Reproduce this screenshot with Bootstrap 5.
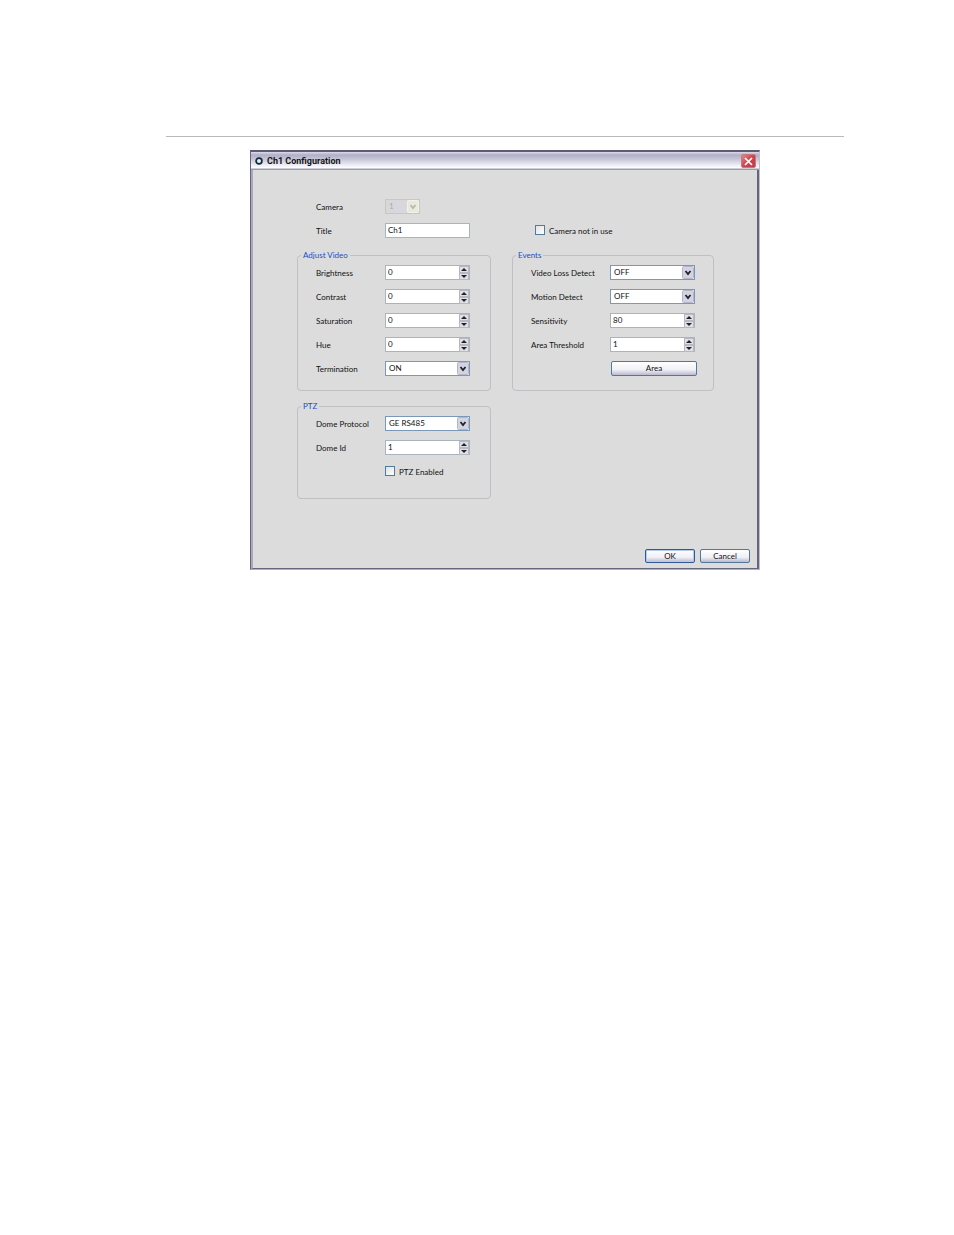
<!DOCTYPE html>
<html lang="en">
<head>
<meta charset="utf-8">
<meta name="viewport" content="width=device-width, initial-scale=1">
<title>Ch1 Configuration</title>
<link href="https://cdn.jsdelivr.net/npm/bootstrap@5.3.0/dist/css/bootstrap.min.css" rel="stylesheet">
<style>
body{font-family:Lato,"Liberation Sans",sans-serif;font-size:8px;line-height:12px;color:#111;background:#fff}
.sheet{padding:136px 110px 40px 166px}
.rule{border-top:1px solid #b9b9b9}
.dialog{max-width:510px;margin-top:13px;background:#dcdcdc;border:1px solid #66657f;border-top:2px solid #5d5c76;border-right-color:#c0c0cc;border-bottom-color:#b0b0c2}
.titlebar{height:18px;padding:0 3px 0 4px;background:linear-gradient(#dcdce8 0,#b0afc8 3px,#c5c4d7 7px,#fafafd 15px,#fff 16px,#9b9bb0 17px)}
.titlebar h1{font:bold 9px/18px Roboto,"Liberation Sans",sans-serif;color:#151515}
.closer{width:15px;height:14px;border:1px solid #c9787f;border-radius:2px;background:linear-gradient(135deg,#dd8a84,#cc4450 50%,#c03a48)}
.client{padding:24px 43px 0 44px;border:solid #66657f;border-width:0 2px 1px;border-left-color:#a9a9be}
.cols{display:grid;grid-template-columns:194fr 202fr;column-gap:21px}
.line{display:flex;align-items:center;height:24px}
.line>label{padding-top:2px}
.line>label:first-child{width:69px;flex:none}
.events .line>label:first-child{width:79px}
.line.inset{padding-left:69px}
.top-fields{padding-left:19px;margin-bottom:8px}
.unused{padding-left:23px;margin-bottom:8px}
fieldset.group{border:1px solid #bfbfc4;border-radius:4px;padding:0 0 10px 18px}
fieldset.ptz{padding-bottom:15px;margin-top:10px}
.group legend{float:none;width:auto;margin:0 0 0 -15px;padding:0 2px;font-size:8px;line-height:10px;color:#1a4fc4}
.field{width:85px;height:15px;border:1px solid #a9b4c2;border-radius:0;background-color:#fff;font-size:8px;line-height:12px;color:#111;padding:0 2px}
select.field{appearance:none;border-color:#7b98b8;padding:0 14px 0 3px;background-repeat:no-repeat;background-position:right center;background-image:url("data:image/svg+xml,%3Csvg xmlns='http://www.w3.org/2000/svg' width='12' height='13'%3E%3Crect x='.5' y='.5' width='11' height='12' rx='1' fill='%23d3d4e2' stroke='%23b3b5ca'/%3E%3Cpath d='M3.5 5 6 8l2.500-3' fill='none' stroke='%23222' stroke-width='1.800'/%3E%3C/svg%3E")}
select.field:disabled{width:35px;color:#aaa;opacity:1;border-color:#c8c8bb;background-color:#d8d8dc;background-image:url("data:image/svg+xml,%3Csvg xmlns='http://www.w3.org/2000/svg' width='12' height='13'%3E%3Crect x='.5' y='.5' width='11' height='12' rx='1' fill='%23e9e9df' stroke='%23f2f2ea'/%3E%3Cpath d='M3.500 5 6 8l2.500-3' fill='none' stroke='%23b9b9a4' stroke-width='1.800'/%3E%3C/svg%3E")}
.spin{display:flex;padding:0 0 0 2px}
.spin input{flex:1;min-width:0;border:0;padding:0;background:none;font-size:8px;line-height:12px;color:#111;appearance:textfield;-moz-appearance:textfield}
.spin input::-webkit-inner-spin-button{display:none}
.arrows{width:10px;display:flex;flex-direction:column}
.arrows button{flex:1;display:flex;padding:0;border:1px solid #b8b8c4;background:#dfdfe6}
.arrows svg{width:8px;height:5px;margin:auto;fill:#222}
.tick{width:10px;height:10px;margin:0 4px 0 0;appearance:none;border:1px solid #4f7c9c;background:linear-gradient(135deg,#dde3e8,#fff)}
.push{height:14px;width:50px;padding:0;border:1px solid #54779c;border-radius:2px;background:linear-gradient(#fff,#f0f0f6 60%,#b9b9d0);font-size:8px;line-height:12px;color:#111}
.push.default{border-color:#31599a;box-shadow:inset 0 0 0 1px #b5cbee}
.push.area{width:86px;height:15px;margin-left:80px}
.actions{display:flex;justify-content:flex-end;gap:5px;margin:50px -36px 0 0;padding-bottom:5px}
</style>
</head>
<body>
<main class="sheet">
<div class="rule"></div>
<form class="dialog mx-auto" onsubmit="return false">
<header class="titlebar d-flex align-items-center">
<svg width="8" height="8" viewBox="0 0 8 8"><circle cx="4" cy="4" r="2.900" fill="#d8f2f8" stroke="#14293d" stroke-width="1.700"/></svg>
<h1 class="m-0 ms-1 flex-grow-1">Ch1 Configuration</h1>
<button type="button" class="closer d-flex p-0" aria-label="Close"><svg class="m-auto" width="9" height="9" viewBox="0 0 9 9"><path d="M1 1 8 8M8 1 1 8" stroke="#fff" stroke-width="1.700"/></svg></button>
</header>
<div class="client">
<div class="cols">
<div class="top-fields">
<div class="line"><label for="camera">Camera</label><select id="camera" class="field" disabled><option>1</option></select></div>
<div class="line"><label for="title">Title</label><input id="title" class="field" type="text" value="Ch1"></div>
</div>
<div class="unused align-self-end"><div class="line"><input class="tick" type="checkbox" id="unused"><label for="unused">Camera not in use</label></div></div>
<div>
<fieldset class="group">
<legend>Adjust Video</legend>
<div class="line"><label for="brightness">Brightness</label><div class="field spin"><input id="brightness" type="number" value="0"><span class="arrows"><button type="button" aria-label="Increase"><svg viewBox="0 0 8 5"><path d="M1 4 4 1l3 3z"/></svg></button><button type="button" aria-label="Decrease"><svg viewBox="0 0 8 5"><path d="M1 1h6L4 4z"/></svg></button></span></div></div>
<div class="line"><label for="contrast">Contrast</label><div class="field spin"><input id="contrast" type="number" value="0"><span class="arrows"><button type="button" aria-label="Increase"><svg viewBox="0 0 8 5"><path d="M1 4 4 1l3 3z"/></svg></button><button type="button" aria-label="Decrease"><svg viewBox="0 0 8 5"><path d="M1 1h6L4 4z"/></svg></button></span></div></div>
<div class="line"><label for="saturation">Saturation</label><div class="field spin"><input id="saturation" type="number" value="0"><span class="arrows"><button type="button" aria-label="Increase"><svg viewBox="0 0 8 5"><path d="M1 4 4 1l3 3z"/></svg></button><button type="button" aria-label="Decrease"><svg viewBox="0 0 8 5"><path d="M1 1h6L4 4z"/></svg></button></span></div></div>
<div class="line"><label for="hue">Hue</label><div class="field spin"><input id="hue" type="number" value="0"><span class="arrows"><button type="button" aria-label="Increase"><svg viewBox="0 0 8 5"><path d="M1 4 4 1l3 3z"/></svg></button><button type="button" aria-label="Decrease"><svg viewBox="0 0 8 5"><path d="M1 1h6L4 4z"/></svg></button></span></div></div>
<div class="line"><label for="termination">Termination</label><select id="termination" class="field"><option>ON</option><option>OFF</option></select></div>
</fieldset>
<fieldset class="group ptz">
<legend>PTZ</legend>
<div class="line"><label for="protocol">Dome Protocol</label><select id="protocol" class="field"><option>GE RS485</option></select></div>
<div class="line"><label for="domeid">Dome Id</label><div class="field spin"><input id="domeid" type="number" value="1"><span class="arrows"><button type="button" aria-label="Increase"><svg viewBox="0 0 8 5"><path d="M1 4 4 1l3 3z"/></svg></button><button type="button" aria-label="Decrease"><svg viewBox="0 0 8 5"><path d="M1 1h6L4 4z"/></svg></button></span></div></div>
<div class="line inset"><input class="tick" type="checkbox" id="ptzon"><label for="ptzon">PTZ Enabled</label></div>
</fieldset>
</div>
<fieldset class="group events align-self-start">
<legend>Events</legend>
<div class="line"><label for="loss">Video Loss Detect</label><select id="loss" class="field"><option>OFF</option><option>ON</option></select></div>
<div class="line"><label for="motion">Motion Detect</label><select id="motion" class="field"><option>OFF</option><option>ON</option></select></div>
<div class="line"><label for="sensitivity">Sensitivity</label><div class="field spin"><input id="sensitivity" type="number" value="80"><span class="arrows"><button type="button" aria-label="Increase"><svg viewBox="0 0 8 5"><path d="M1 4 4 1l3 3z"/></svg></button><button type="button" aria-label="Decrease"><svg viewBox="0 0 8 5"><path d="M1 1h6L4 4z"/></svg></button></span></div></div>
<div class="line"><label for="threshold">Area Threshold</label><div class="field spin"><input id="threshold" type="number" value="1"><span class="arrows"><button type="button" aria-label="Increase"><svg viewBox="0 0 8 5"><path d="M1 4 4 1l3 3z"/></svg></button><button type="button" aria-label="Decrease"><svg viewBox="0 0 8 5"><path d="M1 1h6L4 4z"/></svg></button></span></div></div>
<div class="line"><button type="button" class="push area">Area</button></div>
</fieldset>
</div>
<footer class="actions"><button type="submit" class="push default">OK</button><button type="button" class="push">Cancel</button></footer>
</div>
</form>
</main>
<script src="https://cdn.jsdelivr.net/npm/bootstrap@5.3.0/dist/js/bootstrap.bundle.min.js"></script>
</body>
</html>
